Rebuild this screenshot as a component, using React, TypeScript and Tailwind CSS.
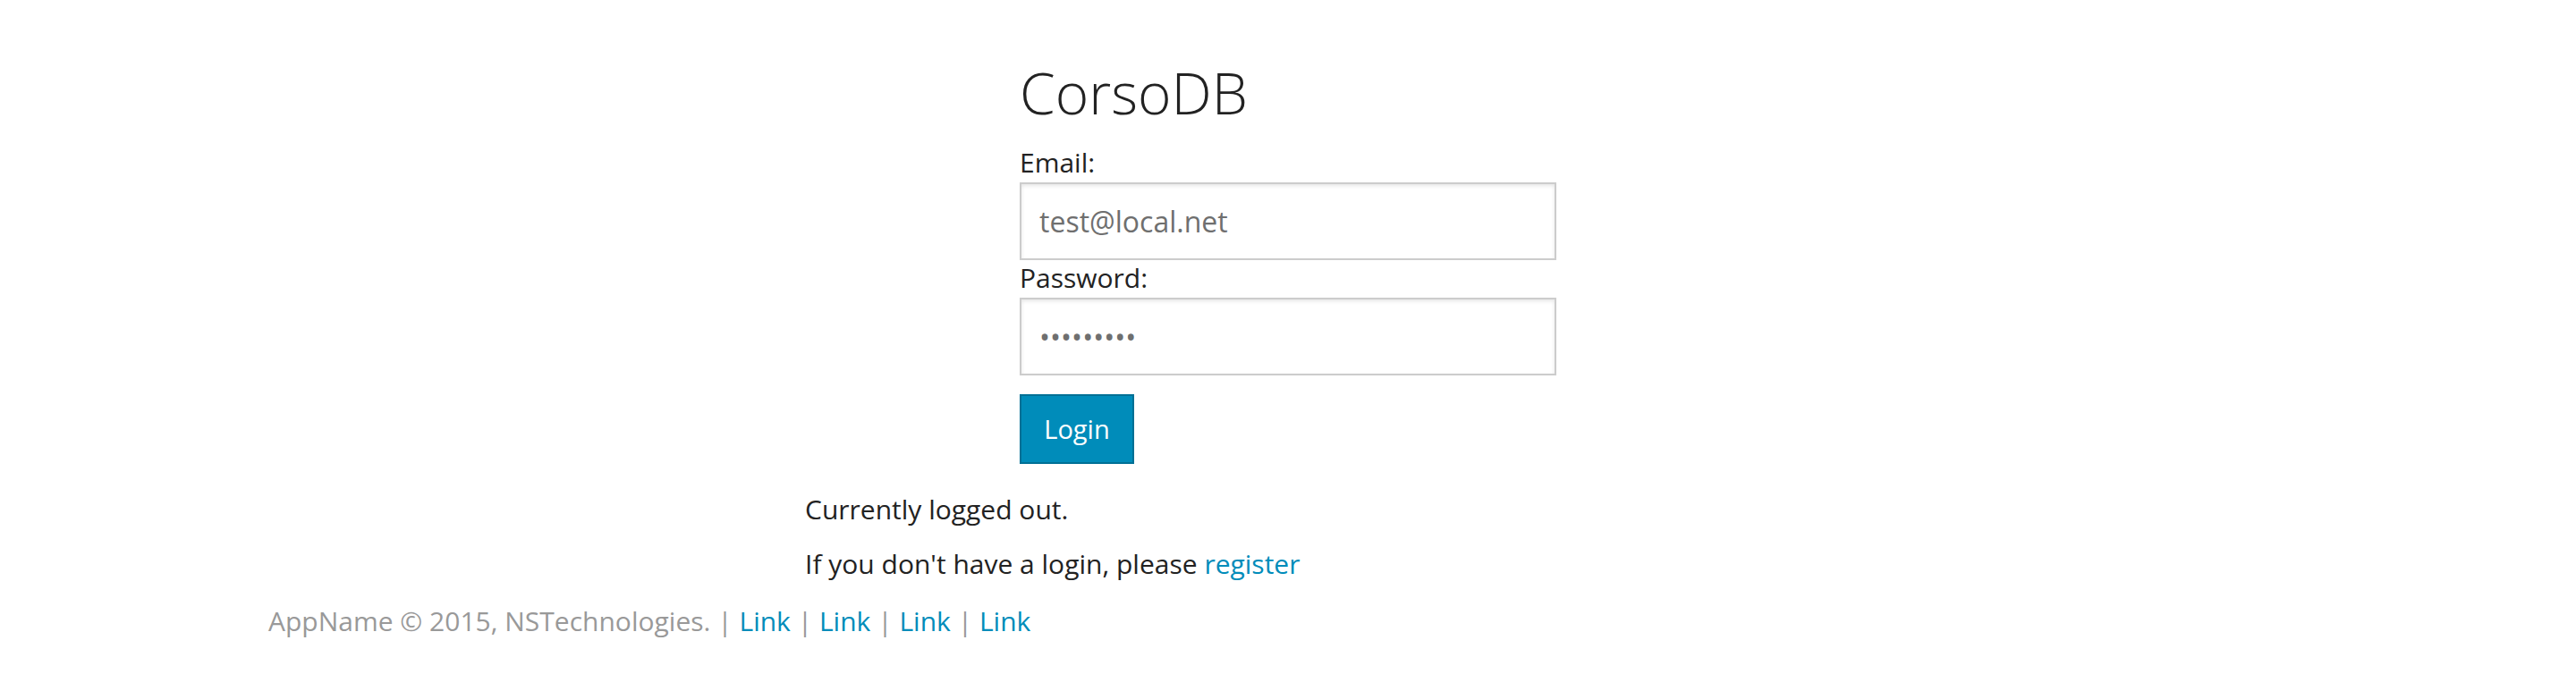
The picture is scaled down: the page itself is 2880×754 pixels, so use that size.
import React from "react";

const font = { fontFamily: '"Open Sans", "Noto Sans", sans-serif' };

function Field({
  label,
  type,
  value,
  className = "",
}: {
  label: string;
  type: string;
  value: string;
  className?: string;
}) {
  return (
    <div className={className}>
      <label className="block text-[30px] leading-[40px] text-[#222]">
        {label}
      </label>
      <input
        type={type}
        defaultValue={value}
        readOnly
        className="mt-[2px] block w-full h-[87px] box-border border-2 border-[#cccccc] bg-white px-[20px] text-[32px] text-[#6f6f6f] shadow-[inset_0_2px_4px_rgba(0,0,0,0.1)] outline-none"
        style={font}
      />
    </div>
  );
}

export default function App() {
  return (
    <div className="min-h-[754px] bg-white pt-[64px]" style={font}>
      <div className="mx-auto w-[600px]">
        <h1 className="text-[64px] font-light leading-[80px] text-[#222]">
          CorsoDB
        </h1>
        <form className="mt-[18px]">
          <Field label="Email:" type="email" value="test@local.net" />
          <Field label="Password:" type="password" value="123456789" />
          <button
            type="button"
            className="mt-[21px] flex h-[78px] w-[128px] items-center justify-center border-2 border-[#007095] bg-[#008cba] text-[29px] text-white"
            style={font}
          >
            Login
          </button>
        </form>
      </div>

      <div className="mx-auto mt-[31px] w-[1080px] text-[30px] leading-[40px] text-[#222]">
        <p>Currently logged out.</p>
        <p className="mt-[21px]">
          If you don't have a login, please{" "}
          <a href="#" className="text-[#008cba]">
            register
          </a>
        </p>
      </div>

      <footer className="mx-auto mt-[24px] w-[2280px] text-[30px] leading-[40px] text-[#999999]">
        AppName © 2015, NSTechnologies. |{" "}
        <a href="#" className="text-[#008cba]">Link</a> |{" "}
        <a href="#" className="text-[#008cba]">Link</a> |{" "}
        <a href="#" className="text-[#008cba]">Link</a> |{" "}
        <a href="#" className="text-[#008cba]">Link</a>
      </footer>
    </div>
  );
}
